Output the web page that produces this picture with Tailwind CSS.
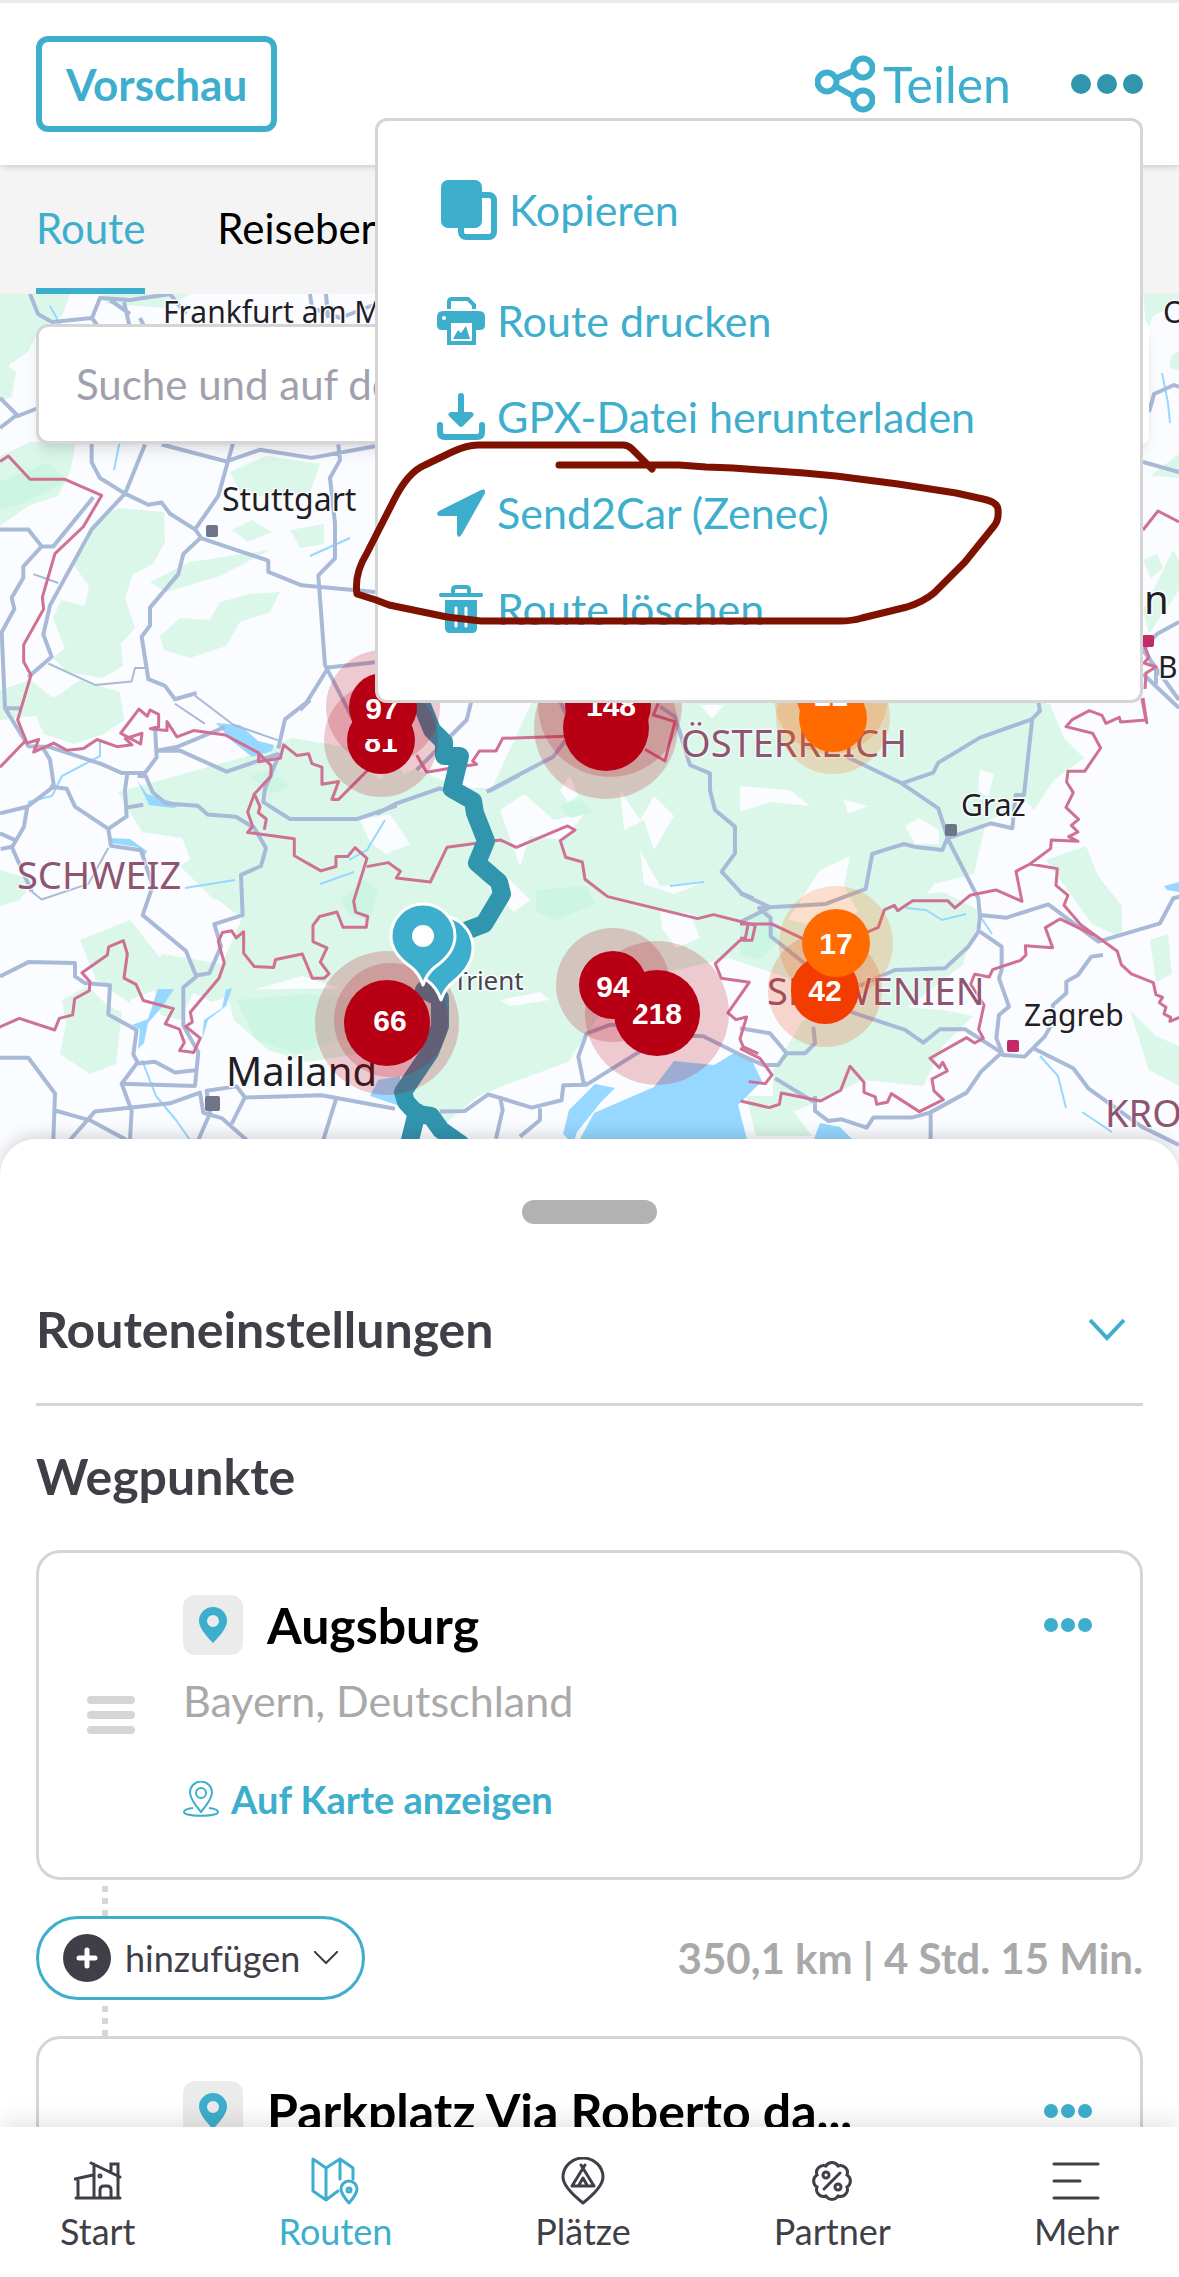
<!DOCTYPE html>
<html lang="de">
<head>
  <meta charset="UTF-8" />
  <meta name="viewport" content="width=device-width, initial-scale=1" />
  <title>Routenplaner</title>
  <script src="https://cdn.jsdelivr.net/npm/@tailwindcss/browser@4"></script>
</head>
<body class="relative h-screen flex flex-col overflow-hidden bg-white font-['Lato','Open_Sans',sans-serif] text-[#3f3f48]">

  <!-- Header -->
  <header class="relative z-20 shrink-0 h-[165px] px-9 border-t-3 border-[#ebebeb] bg-white shadow-md flex items-center justify-between">
    <button class="h-24 px-6 border-6 border-[#3eaecd] rounded-xl text-[44px] font-bold text-[#3eaecd]">Vorschau</button>
    <div class="flex items-center gap-[60px]">
      <button class="flex items-center gap-2 text-[50px] text-[#3eaecd]">
        <svg class="size-[60px]" viewBox="0 0 60 60" fill="none" stroke="currentColor" stroke-width="6">
          <path d="M22 24l18-8M22 33l18 10" />
          <circle cx="12" cy="28" r="9.5" /><circle cx="48" cy="14" r="9.5" /><circle cx="48" cy="46" r="9.5" />
        </svg>
        Teilen
      </button>
      <button aria-label="Menü" class="text-[#3295ae]">
        <svg class="w-18 h-5" viewBox="0 0 72 20" fill="currentColor"><circle cx="10" cy="10" r="10" /><circle cx="36" cy="10" r="10" /><circle cx="62" cy="10" r="10" /></svg>
      </button>
    </div>

    <!-- Dropdown menu -->
    <ul class="absolute right-9 top-[115px] w-[768px] pt-[50px] pb-[67px] pl-[59px] border-3 border-[#d5d5d5] rounded-xl bg-white text-[43px] leading-[48px] text-[#3eaecd]">
      <li><button class="h-[78px] flex items-center gap-3 pl-1">
        <svg class="w-14 h-[60px]" viewBox="0 0 56 60" fill="currentColor">
          <rect x="20" y="15" width="33" height="42" rx="5" fill="none" stroke="currentColor" stroke-width="6" />
          <rect width="41" height="48" rx="7" />
        </svg>Kopieren</button></li>
      <li class="mt-12"><button class="flex items-center gap-3">
        <svg class="size-12" viewBox="0 0 48 48" fill="currentColor">
          <path d="M12 12V5q0-3 3-3h16l6 6v4" fill="none" stroke="currentColor" stroke-width="4" />
          <path d="M6 14h36q6 0 6 6v8q0 5-5 5H5q-5 0-5-5v-8q0-6 6-6z" />
          <rect x="12" y="24" width="25" height="22" fill="#fff" stroke="currentColor" stroke-width="4" />
          <path d="M16 42l5-9 3 3 5-7 4 13z" /><circle cx="7" cy="21" r="2" fill="#fff" />
        </svg>Route drucken</button></li>
      <li class="mt-12"><button class="flex items-center gap-3">
        <svg class="size-12" viewBox="0 0 48 48" fill="currentColor">
          <path d="M24 3v20M3 32v7q0 5 5 5h32q5 0 5-5v-7" fill="none" stroke="currentColor" stroke-width="6" stroke-linecap="round" />
          <path d="M14 19h20q4 1 2 4L26 33q-2 2-4 0L12 23q-2-3 2-4z" />
        </svg>GPX-Datei herunterladen</button></li>
      <li class="mt-12"><button class="flex items-center gap-3">
        <svg class="size-12" viewBox="0 0 48 48" fill="currentColor"><path d="M44 1q5-2 4 3L25 45q-4 6-5 0V27H2q-4-2 0-5z" /></svg>Send2Car (Zenec)</button></li>
      <li class="mt-12"><button class="flex items-center gap-3">
        <svg class="size-12" viewBox="0 0 48 48" fill="currentColor">
          <path d="M3 8h11V5q0-5 5-5h10q5 0 5 5v3h11q2 2 0 4H3q-2-2 0-4zM18 8h12V5q0-1-1-1H19q-1 0-1 1z" fill-rule="evenodd" />
          <path d="M8 15h32v28q0 5-5 5H13q-5 0-5-5z" /><path d="M19 23v18M29 23v18" stroke="#fff" stroke-width="3" stroke-linecap="round" />
        </svg>Route löschen</button></li>
    </ul>
  </header>

  <!-- Tabs -->
  <nav class="shrink-0 h-[129px] px-9 flex gap-[72px] bg-[#f4f4f4] text-[42px] text-black whitespace-nowrap overflow-hidden">
    <a href="#route" class="flex items-center pt-1 border-b-6 border-[#3eaecd] text-[#3eaecd]">Route</a>
    <a href="#bericht" class="flex items-center pt-1 border-b-6 border-transparent">Reisebericht</a>
  </nav>

  <main class="flex-1 min-h-0 overflow-hidden">
    <!-- Map -->
    <section class="relative">
      <svg class="block w-full h-auto font-['Noto_Sans','Open_Sans',sans-serif]" viewBox="0 294 1179 881" fill="none" stroke-linejoin="round">
        <rect y="294" width="1179" height="881" fill="#fbfcff" />

        <!-- Forests and mountains -->
        <g fill="#daf7e9">
          <path d="M0 294h70l-8 22-22 12-12 24-18 12-10 20zM0 360l16 12-4 24-12 6zM100 294h90l-22 14-60-4zM30 442h46l-6 30-12 24-30 10-28 20v-70z" />
          <path d="M98 520l20-12 46 4 1 30-12 22-20 10-8 24 10 30-14 16 2 22-20 12-36-6-14-14 12-10-12-30 8-18 24 6 4-20-16-22 12-18z" />
          <path d="M32 708l28-14 20-14 40 12 4 28-20 14-30 10-30-10zM230 472l36-16 54 8-10 28-40 6-30-6zM232 530l20-10 20 12-24 10zM290 530l34-6v20l-24 4z" />
          <path d="M160 636l20-18 30 2 10-18 30-8 30-2-10 20-30 10-14 24-36 12-26-8zM150 582l40-20 80-12-50 26-54 16z" />
          <path d="M262 752l30-14 60 10 60 20 50 20h30l40-86h514l10 30-30 70-40 20-12 52-40 10-30 40 50 10 10 30-60 46-96 8-20-40-60-20-60 14-60 30-40 60-60 22-30 12-36 30-24-10-6-30 10-40-60-50-60-20-90 26-60-30 10-18 60 10 20-46-40-30-20-50-40-6-24-40z" />
          <path d="M0 690l30-10 26 20-20 16-36 4zM62 1000l26-14 20 20 14 6-6 52-26 10-30-20 6-30z" />
          <path d="M80 940l50-20 40 50 30 10-20 40-40-10-44-30zM180 866l40-26 20 10 14 30-40 20-20-20zM0 870l34 10-14 20-20 6zM226 990l132-2v66l-50 8-40-12-34-30z" />
          <path d="M773 1070l30-50 60-16 80 6 30 6-30 30-20 40-60-6-60 28-30 10zM746 1096h36l30 40h-56zM873 900l70-8 40 20-20 50-50 10-40-20z" />
          <path d="M1020 704h30l14 34 20 20-30 22-20 30-26-30zM1046 860l40-14 12 30 24 30v32l-30-14zM1130 1010l26 26 23 10v40l-30-16z" />
          <path d="M540 294h30l-10 12zM1143 294h36v8l-26 14-6 18zM1172 355l7-4v20l-10-4zM1150 476l29-22v24zM1143 560l14-6 6 14-12 10zM1143 610l30-60 6 10v30l-30 44zM1150 940l18-6 4 40-16 8z" />
        </g>
        <g fill="#fbfcff">
          <path d="M374 716l16-10 2 24 14-6 8 26 20 10-30 14-14-20-8 26-16-10zM460 706l36-6 10 14-30 8zM500 810l24-16 30 26 30-6-20 26-34-4-10 30zM480 860l20 10 30 30-16 12-24-22zM360 820l30-6 20 30-24 10-16-12z" />
          <path d="M620 790l20 30 14-24 20 20-20 34-10-30-20 10zM640 850l20 36 44-4-30 12-30-10z" />
          <path d="M740 786l50 4 20 16-40-4-30 10zM836 776l8 24 24 6-20 8zM905 826l14-8 20 12 0 14-24 0zM700 705h24l-12 14zM820 870l30-14-6 30 14 26-30 16-40-8zM560 790l10-14 8 20-10 6z" />
          <path d="M660 910l30 4 10 24-24 10-14-20zM980 770l14 4-6 24-10-8zM500 1000l40-8 10 8-40 6zM130 1000l24-10 8 30-24 4z" />
        </g>
        <g fill="#cdf5e4">
          <path d="M0 482l50-20 16 20-40 20-26 8zM236 1000l70-6 50 4-10 40-50 16-40-14zM536 890l50-4 10 18-40 16-20-8zM250 776l20-6 20 16-20 8zM340 900l24-20 14 10-8 30-20-4zM560 806l20-6 14 12-24 6zM740 920l30-10 10 30-20 20-20-6z" />
        </g>

        <!-- Water -->
        <g fill="#96d8ff">
          <path d="M216 723l24 2 18 16 16 4-2 6-20 6-20-16zM137 780l10 14 36 11-10 3-24-3zM110 838l20 1 17 12-4 8-6-12-26-4z" />
          <path d="M158 989h16l-12 18-14 16-4 20-6 6 2-20-8-4 16-6zM226 990l6-2-6 18-18 14-6 20 2-20 18-12zM370 1096l8-16 22-4v30z" />
          <path d="M563 1134l6-24 26-26 20 4-14 14-24 30-4 12zM580 1139l14-26 60-26 20-26 40 4 20-12 16 4 12 24-24 24 10 38zM814 1139l6-16 20 4 12 12zM1164 886l15-4v10l-12-2z" />
        </g>
        <g stroke="#96d8ff" stroke-width="2">
          <path d="M50 306l20 36 24-8M120 440l-6 30M310 556l40-18M385 820l-18 30-18 10M320 884l34-12M142 1060l14 36 20 24 14 20M100 742v14l-38 20-10 20-24 6M185 888l50-8M906 908l20 2 16 10 24-6M980 916l12 18M670 886l34-4M490 792l30-16M1162 373l6 30 2 20M1040 1056l18 20 8 32M1082 1112l30 20" />
        </g>

        <!-- Roads, western half -->
        <g transform="translate(0 440) scale(.3333 .447)" stroke="#a9b9d8" stroke-width="4">
          <path vector-effect="non-scaling-stroke" d="M275 0v50l25 35 75 35-100 80-125 170-20 65 25 50-70 45M435 10l-60 110 70 25 40-5 25 25 75 35 70-75 45-120 10-10M485 10l195 38 100-26 155 18 190-26M1015 10l5 35-30 40 15 100v80l-50 38 20 200 90 130M585 200l20 20 200 50v25l100 30 220 15M600 220l-50 35-15 45-85 75v40l-25 25 20 95 50 15 30 30 65-14" />
          <path vector-effect="non-scaling-stroke" d="M0 200h85l40 38h35l120-110M125 238l-55 45v25l-35 45 8 25L5 430 15 600l70 85 65 2 155 38M10 600h50M130 690l20 25 12 60-80 45-10 45-35 45-35 5M0 835l85-15M0 880l45 15M35 910l60 100M150 775l50 5 25 40 100 50 55-28-5-60 8-40M325 870l8 38 90 10 35 80-30 65 130 80 30 55 40-5 35-60-20-50 85-20-5-90 60-20 15-40-35-45-55-25-85-5-30-20-95-5-40-25-20-35-25-2M305 725l60 20h70l35-35-5-70M380 822l50-6M470 695l60-8 145-45M470 695h70l140 47 155-40M835 690l20-65 65-38 65-78 140-12M840 700l-45 80-5 30 80 38h200l120-30" />
          <path vector-effect="non-scaling-stroke" d="M0 1200l85-32 140 2v30l30 15 75 5-5 65 85 35-10 55 15 20 50-4 60 24 60-5M590 1200l-40 25v85l45 60-10 75-220-5 50-50M365 1440l30 60-5 66M0 1382h85l80 80-5 104M165 1500l105 22 110 44M210 1566l75-64 225-18 90-24 10 45 55 12 75 49M595 1566l35-60-10-50 90-10 25 25 230-5 220 30M735 1470l-40 60M1010 1470l-40 96" />
          <path vector-effect="non-scaling-stroke" stroke-width="2" d="M145 500l140 48 110-8 10-30h30M525 590l90 45M585 572l115 65 135 35M95 1010l30 18 140-35 60-80M100 300l75 20" />
        </g>
        <path d="M30 294l8 20 14 8 40-4 8-20 30 2 40-6 16 20M92 318l10 14 28-4-6-26M110 300l20 14M140 318l6 12M0 398l18 18 20-8M18 414l-18 14M310 294l2 14 28 10 36-14M326 294l2 24" stroke="#a9b9d8" stroke-width="4" />

        <!-- Roads, eastern half -->
        <g transform="translate(300 680) scale(.3333)" stroke="#a9b9d8" stroke-width="4">
          <path vector-effect="non-scaling-stroke" d="M515 60l-15 60-90 90-60 60M0 90l30-30M230 402l60-32 130-45 50 20M560 335l200-105 60-80-60-130M1080 80l45 30 45 145 60 25v50l15 60 60 50v80l-40 55 60 65 35 15M420 1295l75-2 70-50 130 40 90-22 5-45 70-2 240-150 110 5 150 75M860 1215l-10-10-15-75 25-70 70-25 110-5M600 1250l8 40-20 86M720 1285v35l-60 50" />
        </g>
        <g transform="translate(740 660) scale(.3333)" stroke="#a9b9d8" stroke-width="4">
          <path vector-effect="non-scaling-stroke" d="M320 290l165 80 110 75 30 95 90 175 5 55-5 45-30 45-70 65-150 5-100 45-30 5M485 370l95-32 15-30 125-75 155-55 25-25-5-30M877 175l-25 230h-25l-10 100-65-15-130 45-15 35-85-10-30-8-65 20-30 10-20 105-120 45-200 12 35 30v55l100 80M0 700l90 42-90 45M720 765l80 8 125-40 150 112 185-55 40-75 20-5M720 815l65 45v70l-8 25 30 85-30 25-8 70 20 50 65 5 60-60 20-35 5-60 40-35v-35l35-20 40-55 35-5" />
          <path vector-effect="non-scaling-stroke" d="M330 1055l165 55 55 38 50-40h75l110 70-60 55-45 65-110 60-55 15h-115l-20 30-75-25-40 5-40-30v-45M0 1105l90 15 50 60h55l30-30-5-50M0 1185l70 30h45l25-35M572 1360v80M880 1165l120 60 45 60 160 115 112 55M105 1255l115 70" />
        </g>
        <path d="M1149 412l5-18 20-9 5 2M1143 462l36 10M1143 650l14-16 22-12M1143 650l36 50M1156 668v16M1143 674l36 34" stroke="#a9b9d8" stroke-width="4" />

        <!-- Country borders -->
        <g transform="translate(0 440) scale(.3333 .447)" stroke="#cf7095" stroke-width="3">
          <path vector-effect="non-scaling-stroke" d="M0 48l25-12 65 52h105l110 36-55 70-85 60-38 98 4 26-60 80v38l22 30-40 100 28 52 35-8-15 28 60-20 40 16 50-4 40-20 60 16 45-4-20-14 50-12-4 24-40-16-20-8 55-54 25 16 8-14 26 10v28l-25 4 50 4 0-20 30 34 50-14 95 10 100 40v20l65-8 10-30 40 24 35-4 10 22 30 8v38l50-6-20 40h20l120-90M0 732l75-58M775 700l38 28v24l-50 40-20 40 15 32-15 14 140 14v38l80 34 45-10v-22h35l22-20 36 24-40 96 6 24 36 10-4 24h-70l-18-34-52 10-20 20v36l42 14-20 32 26 26-14 10h-36l-30-54-80 12-6 18-58-2-32-30v-48l-22 14-14-16-28 4-12 20 18 48-16 34-86 76 6 22-20 10 44 26-20 32-42-4 14-18-15-30-42-12 24-34-90-18-22-36-36-14 10-54-12-30-44 14-4 18-76 40 24 20-2 20-44 18-6 36-40 8-14 26-106-26-74 24M765 795l15 25-5 14 24 14-6 24" />
        </g>
        <g transform="translate(300 680) scale(.3333)" stroke="#cf7095" stroke-width="3">
          <path vector-effect="non-scaling-stroke" d="M350 225l30 52 70-12 80-12-12-10 20-30h50l20-38 190-6M1075 70l-15 35 65 20-30 118-60-35M200 560l65-12 36 26-12 20 102 12 50-104 160-22 48 22 154-64 22 12-44 32 16 50 50 14 8 52 68 52 270 66 48-12 125 32-10 45h-36l-74 70 18 44 84 12-64 92 24 20 32-8-20 66 10 24 45 20" />
        </g>
        <g transform="translate(740 660) scale(.3333)" stroke="#cf7095" stroke-width="3">
          <path vector-effect="non-scaling-stroke" d="M0 792h95l95 45 190-20 35-15 18-52 30-14 10 16 45-30h105l22 22 45-38 78-16 78 34-18-90 42-22 62-46 2-26 80 4-28-14 28-14-20-20 22-18-38-36 22-44-20-32 4-32h50l48-70-24-44-80-20 20-22 50-26 38 14 12 24 40-18 4 14 76-6-12-64M870 612l82 14-4 50 36 30-12 30 50 58 110 80 12 40 30 28 66 26 8 36 20 8-10 16 20 14-6 20 20 10-2 12 35-14M1060 825l-100-48-44 26 22 60-82-6 2 28-16 16-84 28-10 22-44-8-12 30 40 62-16 74 14 26-26 14-24-16-110 62 28 28 10-16 14 26-46 24 6 36 28 26-72 36-84-54-12 26-32 6-4-22-34-14v-30l-42-48-28 72-60 32-118-24-6 34-30 10-86-20M0 1165l60 30 36 50-20 26-50-6M24 795l-8 40H0" />
        </g>
        <path d="M1143 530l15-19 21 11M1145 647l4 10-5 6 12 4-10 6-1 16M1143 698l4 26" stroke="#cf7095" stroke-width="3" />

        <!-- Labels -->
        <g fill="#1f2024" font-size="30" stroke="#fbfcff" stroke-width="3" paint-order="stroke">
          <text x="163" y="323">Frankfurt am Main</text>
          <text x="222" y="511" font-size="32">Stuttgart</text>
          <text x="961" y="816">Graz</text>
          <text x="1024" y="1026">Zagreb</text>
          <text x="1158" y="678">Br</text>
          <text x="1163" y="323">Os</text>
          <text x="453" y="990" font-size="26" fill="#44464d">Trient</text>
          <text x="226" y="1086" font-size="40">Mailand</text>
          <text x="1074" y="614" font-size="40">Wien</text>
        </g>
        <g fill="#8f5470" font-size="38" stroke="#fbfcff" stroke-opacity=".6" stroke-width="3" paint-order="stroke">
          <text x="17" y="889">SCHWEIZ</text>
          <text x="681" y="757">ÖSTERREICH</text>
          <text x="767" y="1005">SLOWENIEN</text>
          <text x="1105" y="1127">KROATIEN</text>
        </g>
        <g fill="#6e7589"><rect x="206" y="525" width="12" height="12" rx="2" /><rect x="945" y="824" width="12" height="12" rx="2" /><rect x="205" y="1096" width="15" height="15" rx="2" /></g>
        <g fill="#c22c66"><rect x="1007" y="1040" width="12" height="12" rx="2" /><rect x="1142" y="635" width="12" height="12" rx="2" /></g>

        <!-- Route line -->
        <g stroke="#3295ae" stroke-width="18" stroke-linecap="round">
          <path d="M420 700l12 30 12 12 0 14h16l-8 33 21 12 2 12 11 28-9 22 22 19 3 12-18 30-16 6" />
          <path d="M424 990l16 8v28l-10 26-27 40 3 10 11 12 14 2 10 14 20 14M417 1112l-10 40" />
        </g>

        <!-- Clusters -->
        <g fill="#b80014">
          <g fill-opacity=".2"><circle cx="381" cy="740" r="57" /><circle cx="383" cy="707" r="57" /><circle cx="606" cy="727" r="72" /><circle cx="610" cy="705" r="72" /><circle cx="391" cy="1020" r="57" /><circle cx="387" cy="1023" r="72" /><circle cx="657" cy="1013" r="72" /><circle cx="613" cy="985" r="57" /></g>
          <circle cx="381" cy="740" r="34" /><circle cx="383" cy="707" r="34" /><circle cx="606" cy="728" r="43" /><circle cx="608" cy="705" r="43" /><circle cx="387" cy="1023" r="43" /><circle cx="613" cy="985" r="34" /><circle cx="657" cy="1013" r="43" />
        </g>
        <g fill="#ff6b00">
          <g fill-opacity=".2"><circle cx="833" cy="717" r="57" /><circle cx="831" cy="697" r="57" /><circle cx="836" cy="943" r="57" /><circle cx="825" cy="990" r="57" fill="#f23c00" /></g>
          <circle cx="833" cy="718" r="34" /><circle cx="831" cy="697" r="34" /><circle cx="825" cy="990" r="34" fill="#f23c00" /><circle cx="836" cy="943" r="34" />
        </g>
        <g fill="#fff" font-family="Liberation Sans, Arial, sans-serif" font-size="30" font-weight="700" text-anchor="middle">
          <text x="381" y="752">81</text>
          <path d="M356 720h50v19h-50z" fill="#b80014" />
          <text x="382" y="719">97</text>
          <text x="611" y="716">148</text>
          <text x="390" y="1031">66</text>
          <text x="657" y="1024">218</text>
          <path d="M626 996h18l-8 14-10 8z" fill="#b80014" />
          <text x="613" y="997">94</text>
          <text x="831" y="706">21</text>
          <text x="836" y="954">17</text>
          <text x="825" y="1001">42</text>
        </g>

        <!-- Waypoint pins -->
        <g fill="#3eaecd" stroke="#fff" stroke-width="3">
          <path d="M441 1000q-4-12-12-18-20-16-20-34a32 32 0 0 1 64 0q0 18-20 34-8 6-12 18z" />
          <path d="M423 985q-4-12-12-18-20-14-20-31a32 32 0 0 1 64 0q0 17-20 31-8 6-12 18z" />
          <circle cx="423" cy="936" r="11" fill="#fff" stroke="none" />
        </g>
      </svg>

      <form class="absolute top-[26px] left-9 right-[30px] flex items-end rounded-xl shadow-lg">
        <input type="text" aria-label="Suche" placeholder="Suche und auf der Karte anzeigen" class="flex-1 min-w-0 h-[120px] px-[37px] border-3 border-r-0 border-[#d5d5d5] rounded-l-xl bg-white text-[42px] placeholder-[#a1a1ad]" />
        <button aria-label="Suchen" class="w-16 h-[124px] rounded-r-lg bg-white"></button>
      </form>
    </section>

    <!-- Bottom sheet -->
    <section class="relative z-10 -mt-9 px-9 bg-white rounded-t-[36px] shadow-[0_-4px_16px_rgba(0,0,0,0.15)]">
      <div class="pt-[61px]"><div class="mx-auto w-[135px] h-6 rounded-full bg-[#b2b2b2]"></div></div>

      <button class="mt-[60px] w-full h-[122px] pb-7 border-b-3 border-[#d5d5d5] flex items-center justify-between pr-[18px] text-[50px] font-bold">
        Routeneinstellungen
        <svg class="w-9 h-6" viewBox="0 0 36 24" fill="none" stroke="#3eaecd" stroke-width="4"><path d="M1 2l17 18L35 2" /></svg>
      </button>

      <h2 class="mt-10 mb-11 text-[50px] leading-[60px] font-bold">Wegpunkte</h2>

      <article class="flex items-stretch h-[330px] border-3 border-[#d5d5d5] rounded-3xl pt-[42px] pr-12">
        <div class="w-36 shrink-0 pl-12 pt-[101px]">
          <svg class="w-12 h-[38px]" viewBox="0 0 48 38" fill="#d5d5d5"><rect width="48" height="8" rx="4" /><rect y="15" width="48" height="8" rx="4" /><rect y="30" width="48" height="8" rx="4" /></svg>
        </div>
        <div class="flex-1 min-w-0">
          <div class="flex items-center h-[60px]">
            <span class="size-[60px] shrink-0 rounded-xl bg-[#ebebeb] flex items-center justify-center">
              <svg class="w-7 h-9" viewBox="0 0 28 36" fill="#3eaecd" fill-rule="evenodd"><path d="M14 36Q0 22 0 14a14 14 0 0 1 28 0q0 8-14 22zM14 8a6 6 0 1 0 0 12 6 6 0 0 0 0-12z" /></svg>
            </span>
            <h3 class="ml-6 flex-1 truncate text-[50px] leading-[60px] font-bold text-black">Augsburg</h3>
            <button aria-label="Mehr zu Augsburg"><svg class="w-12 h-[14px]" viewBox="0 0 48 14" fill="#3eaecd"><circle cx="7" cy="7" r="7" /><circle cx="24" cy="7" r="7" /><circle cx="41" cy="7" r="7" /></svg></button>
          </div>
          <p class="mt-4 mb-1 text-[43px] leading-[60px] text-[#a9a9a9]">Bayern, Deutschland</p>
          <a href="#karte" class="mt-10 inline-flex items-center gap-3 text-[38px] leading-[48px] font-bold text-[#3eaecd]">
            <svg class="w-9 h-9" viewBox="0 0 36 36" fill="none" stroke="currentColor" stroke-width="2"><path d="M18 31Q7 18 7 11.500a11 11 0 0 1 22 0Q29 18 18 31z" /><circle cx="18" cy="12" r="5" /><path d="M10 27q-9 1-9 4c0 5 34 5 34 0q0-3-9-4" /></svg>
            Auf Karte anzeigen
          </a>
        </div>
      </article>

      <div class="ml-[66px] h-9">
        <svg class="w-[6px] h-9" viewBox="0 0 6 36" fill="#d5d5d5"><path d="M0 6h6v6H0zM0 18h6v6H0zM0 30h6v6H0z" /></svg>
      </div>
      <div class="flex items-center justify-between">
        <button class="h-[84px] px-6 border-3 border-[#3eaecd] rounded-full flex items-center gap-[14px] text-4xl">
          <svg class="size-12" viewBox="0 0 48 48"><circle cx="24" cy="24" r="24" fill="#3f3f48" /><path d="M24 16v16M16 24h16" stroke="#fff" stroke-width="5" stroke-linecap="round" /></svg>
          hinzufügen
          <svg class="w-6 h-[14px]" viewBox="0 0 24 14" fill="none" stroke="currentColor" stroke-width="2"><path d="M0 0l12 12L24 0" /></svg>
        </button>
        <span class="text-[42px] font-bold text-[#a9a9a9]">350,1 km | 4 Std. 15 Min.</span>
      </div>
      <div class="ml-[66px] h-9">
        <svg class="w-[6px] h-9" viewBox="0 0 6 36" fill="#d5d5d5"><path d="M0 6h6v6H0zM0 18h6v6H0zM0 30h6v6H0z" /></svg>
      </div>

      <article class="flex h-[330px] border-3 border-[#d5d5d5] rounded-3xl pt-[42px] pr-12">
        <div class="w-36 shrink-0"></div>
        <div class="flex-1 min-w-0">
          <div class="flex items-center h-[60px]">
            <span class="size-[60px] shrink-0 rounded-xl bg-[#ebebeb] flex items-center justify-center">
              <svg class="w-7 h-9" viewBox="0 0 28 36" fill="#3eaecd" fill-rule="evenodd"><path d="M14 36Q0 22 0 14a14 14 0 0 1 28 0q0 8-14 22zM14 8a6 6 0 1 0 0 12 6 6 0 0 0 0-12z" /></svg>
            </span>
            <h3 class="ml-6 flex-1 truncate text-[50px] leading-[60px] font-bold text-black">Parkplatz Via Roberto da...</h3>
            <button aria-label="Mehr zum Parkplatz"><svg class="w-12 h-[14px]" viewBox="0 0 48 14" fill="#3eaecd"><circle cx="7" cy="7" r="7" /><circle cx="24" cy="7" r="7" /><circle cx="41" cy="7" r="7" /></svg></button>
          </div>
        </div>
      </article>
    </section>
  </main>

  <!-- Bottom navigation -->
  <nav class="relative z-20 shrink-0 h-[150px] pt-[30px] px-[60px] flex justify-between bg-white shadow-[0_-4px_24px_rgba(0,0,0,0.12)] text-4xl leading-[48px]">
    <a href="#start" class="flex flex-col items-center gap-[2px]">
      <svg class="size-12" viewBox="0 0 48 48" fill="none" stroke="currentColor" stroke-width="3" stroke-linecap="round"><path d="M2 41h44M4 41V22M1 22l18-4M20 41V7M17 6l29 14M37 14V7h7v34M26 41V33q0-4 4-4h3q4 0 4 4v8" /><circle cx="26" cy="19" r="1" /></svg>
      Start
    </a>
    <a href="#routen" class="flex flex-col items-center gap-[2px] text-[#3eaecd]">
      <svg class="size-12" viewBox="0 0 48 48" fill="none" stroke="currentColor" stroke-width="3" stroke-linecap="round" stroke-linejoin="round"><path d="M27 34L15 43 2 34V2l13 9v32M15 11l14-9 13 9v11M29 2v20" /><path d="M38 46q-8-9-8-14a8 8 0 0 1 16 0q0 5-8 14z" /><circle cx="38" cy="33" r="2" /></svg>
      Routen
    </a>
    <a href="#plaetze" class="flex flex-col items-center gap-[2px]">
      <svg class="size-12" viewBox="0 0 48 48" fill="none" stroke="currentColor" stroke-width="3" stroke-linecap="round" stroke-linejoin="round"><path d="M24 46Q4 30 4 20a20 19 0 0 1 40 0q0 10-20 26z" /><path d="M22 8l13 21H13L26 8M20 28l4-7 4 7" /></svg>
      Plätze
    </a>
    <a href="#partner" class="flex flex-col items-center gap-[2px]">
      <svg class="size-12" viewBox="0 0 48 48" fill="none" stroke="currentColor" stroke-width="3" stroke-linecap="round"><path d="M39 30a7 7 0 0 1-9 9a7 7 0 0 1-12 0a7 7 0 0 1-9-9a7 7 0 0 1 0-12a7 7 0 0 1 9-9a7 7 0 0 1 12 0a7 7 0 0 1 9 9a7 7 0 0 1 0 12z" /><path d="M32 16L16 32" /><circle cx="18" cy="18" r="3" /><circle cx="30" cy="30" r="3" /></svg>
      Partner
    </a>
    <a href="#mehr" class="flex flex-col items-center gap-[2px]">
      <svg class="size-12" viewBox="0 0 48 48" fill="none" stroke="currentColor" stroke-width="3" stroke-linecap="round"><path d="M2 7h44M2 24h26M2 41h44" /></svg>
      Mehr
    </a>
  </nav>

  <!-- Hand-drawn marking -->
  <svg class="absolute z-30 top-0 left-0 w-full pointer-events-none" viewBox="0 0 1179 703" fill="none" stroke="#7f1100" stroke-width="7" stroke-linecap="round" stroke-linejoin="round">
    <path d="M559 465H679L706 467 733 468 804 473 836 476 898 484 956 493 983 499Q998 502 998 510Q999 520 994 526L965 562 934 593Q923 602 907 607L862 618Q852 621 840 621H481L447 617 389 605 376 600 357 594Q354 574 367 553L394 500Q408 472 425 465L452 452Q467 445 478 445H623Q628 445 632 449L652 469" />
  </svg>
</body>
</html>
